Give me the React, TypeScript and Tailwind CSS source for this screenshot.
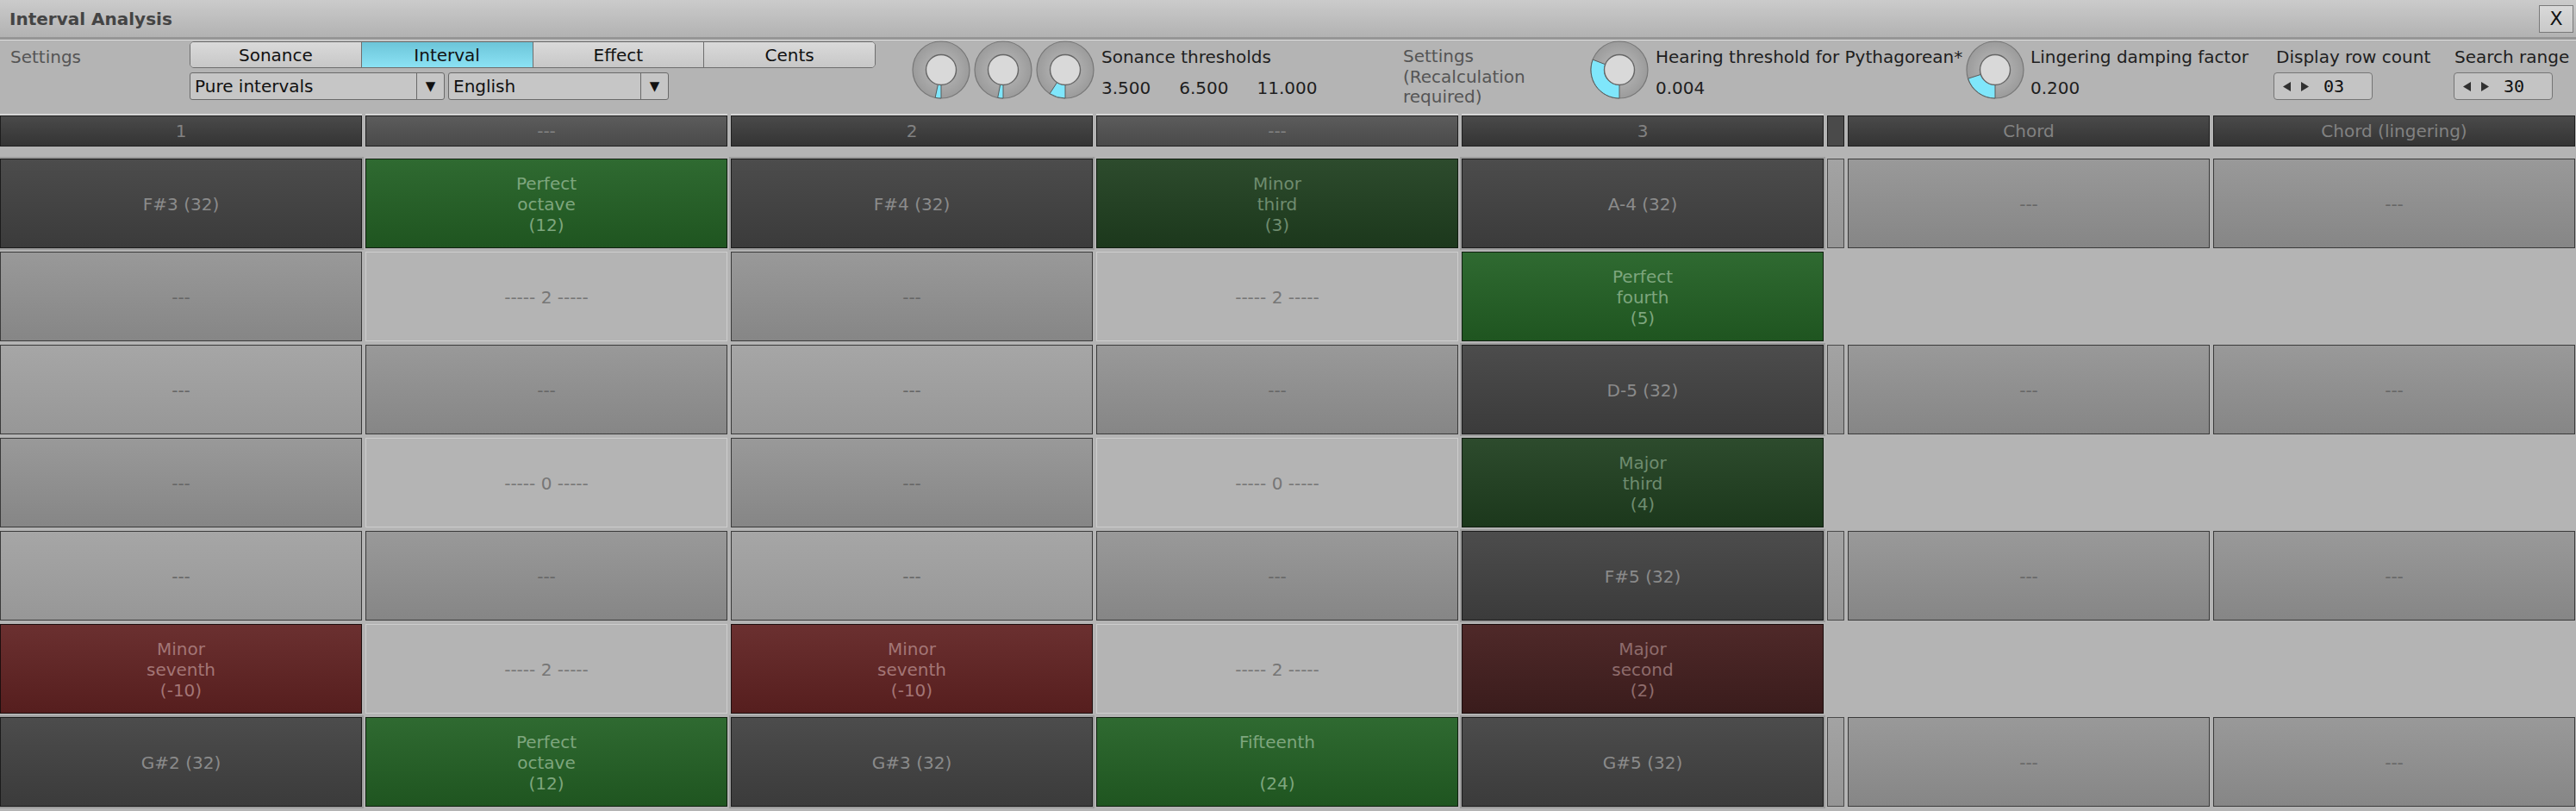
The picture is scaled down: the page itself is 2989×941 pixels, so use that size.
import React from 'react'

type Kind =
    | 'note'
    | 'green'
    | 'dgreen'
    | 'red'
    | 'dred'
    | 'grayA'
    | 'grayB'
    | 'plain'
    | 'small'
    | 'empty'

type Cell = {kind: Kind; text?: string}

const n = (text: string): Cell => ({kind: 'note', text})
const g = (text: string): Cell => ({kind: 'green', text})
const dg = (text: string): Cell => ({kind: 'dgreen', text})
const r = (text: string): Cell => ({kind: 'red', text})
const dr = (text: string): Cell => ({kind: 'dred', text})
const A: Cell = {kind: 'grayA', text: '---'}
const B: Cell = {kind: 'grayB', text: '---'}
const p = (text: string): Cell => ({kind: 'plain', text})
const S: Cell = {kind: 'small'}
const E: Cell = {kind: 'empty'}

const rows: Cell[][] = [
    [n('F#3 (32)'), g('Perfect\noctave\n(12)'), n('F#4 (32)'), dg('Minor\nthird\n(3)'), n('A-4 (32)'), S, A, A],
    [A, p('----- 2 -----'), A, p('----- 2 -----'), g('Perfect\nfourth\n(5)'), E, E, E],
    [B, A, B, A, n('D-5 (32)'), S, A, A],
    [A, p('----- 0 -----'), A, p('----- 0 -----'), dg('Major\nthird\n(4)'), E, E, E],
    [B, A, B, A, n('F#5 (32)'), S, A, A],
    [r('Minor\nseventh\n(-10)'), p('----- 2 -----'), r('Minor\nseventh\n(-10)'), p('----- 2 -----'), dr('Major\nsecond\n(2)'), E, E, E],
    [n('G#2 (32)'), g('Perfect\noctave\n(12)'), n('G#3 (32)'), g('Fifteenth\n\n(24)'), n('G#5 (32)'), S, A, A],
]

const kindClass: Record<Kind, string> = {
    note: 'bg-gradient-to-b from-[#4c4c4c] to-[#3b3b3b] border border-[#1c1c1c] text-[#8b8b8b] shadow-[0_0_0_2px_#9c9c9c]',
    green: 'bg-gradient-to-b from-[#2f6a31] to-[#1f5520] border border-[#0f200f] text-[#7ea67e]',
    dgreen: 'bg-gradient-to-b from-[#2d4b2d] to-[#1c381c] border border-[#0f1c0f] text-[#6f8c6f]',
    red: 'bg-gradient-to-b from-[#6b3030] to-[#561e1e] border border-[#1e0e0e] text-[#a37676]',
    dred: 'bg-gradient-to-b from-[#4f2929] to-[#3a1c1c] border border-[#1a0c0c] text-[#8e6c6c]',
    grayA: 'bg-gradient-to-b from-[#999999] to-[#868686] border border-[#3a3a3a] text-[#666666]',
    grayB: 'bg-gradient-to-b from-[#a6a6a6] to-[#979797] border border-[#3a3a3a] text-[#666666]',
    plain: 'border border-[#cdcdcd] text-[#767676]',
    small: 'bg-gradient-to-b from-[#a3a3a3] to-[#959595] border border-[#4a4a4a]',
    empty: '',
}

function GridCell({cell}: {cell: Cell}) {
    return (
        <div
            className={`flex items-center justify-center pt-[2px] text-center whitespace-pre leading-[24px] text-[20px] ${kindClass[cell.kind]}`}>
            {cell.text}
        </div>
    )
}

function Knob({angle}: {angle: number}) {
    const cx = 34
    const cy = 34
    const R = 33
    const ri = 17.5
    const rad = (angle * Math.PI) / 180
    const ox = cx - R * Math.sin(rad)
    const oy = cy + R * Math.cos(rad)
    const ix = cx - ri * Math.sin(rad)
    const iy = cy + ri * Math.cos(rad)
    const large = angle > 180 ? 1 : 0
    const d = `M ${cx} ${cy + R} A ${R} ${R} 0 ${large} 1 ${ox} ${oy} L ${ix} ${iy} A ${ri} ${ri} 0 ${large} 0 ${cx} ${cy + ri} Z`
    return (
        <svg width="68" height="68" viewBox="0 0 68 68" className="shrink-0">
            <defs>
                <radialGradient id="ring" cx="50%" cy="50%" r="50%">
                    <stop offset="60%" stopColor="#a9a9a9" />
                    <stop offset="100%" stopColor="#9b9b9b" />
                </radialGradient>
            </defs>
            <circle cx={cx} cy={cy} r={R} fill="url(#ring)" stroke="#777777" strokeWidth="1.2" />
            <path d={d} fill="#7fe6fb" stroke="#5a5a5a" strokeWidth="1" />
            <circle cx={cx} cy={cy} r={ri} fill="#d9d9d9" stroke="#666666" strokeWidth="1.4" />
        </svg>
    )
}

function Spinner({value}: {value: string}) {
    return (
        <div className="mt-[6px] flex h-[32px] w-[115px] items-center rounded-[4px] border border-[#757575] bg-[#c4c4c4] pl-[10px]">
            <svg width="9" height="11" viewBox="0 0 9 11">
                <path d="M9 0 L0 5.5 L9 11 Z" fill="#303030" />
            </svg>
            <svg width="9" height="11" viewBox="0 0 9 11" className="ml-[12px]">
                <path d="M0 0 L9 5.5 L0 11 Z" fill="#303030" />
            </svg>
            <span className="ml-[17px] font-['DejaVu_Sans_Mono'] text-[20px] text-[#111]">{value}</span>
        </div>
    )
}

const headers = ['1', '---', '2', '---', '3', '', 'Chord', 'Chord (lingering)']

export default function App() {
    return (
        <div className="w-[2989px] h-[941px] overflow-hidden bg-[#b4b4b4] font-['DejaVu_Sans',sans-serif] text-[20px]">
            {/* title bar */}
            <div className="flex h-[43px] items-center justify-between bg-gradient-to-b from-[#cbcbcb] to-[#b2b2b2] pl-[11px] pr-[3px]">
                <span className="font-bold text-[#444444]">Interval Analysis</span>
                <div className="flex h-[32px] w-[40px] items-center justify-center border border-[#7a7a7a] bg-gradient-to-b from-[#d9d9d9] to-[#c9c9c9] text-[22px] leading-none text-[#111]">
                    X
                </div>
            </div>
            <div className="h-[3px] bg-[#959595]" />
            <div className="h-[1px] bg-[#dedede]" />

            {/* settings */}
            <div className="flex h-[87px] leading-[24px]">
                <div className="w-[220px] pl-[12px] pt-[7px] text-[#555555]">Settings</div>

                <div className="w-[796px] pt-[1px]">
                    <div className="flex h-[31px] overflow-hidden rounded-[5px] border border-[#6e6e6e]">
                        <div className="flex flex-1 items-center justify-center bg-gradient-to-b from-[#dadada] to-[#c7c7c7] text-[#111]">
                            Sonance
                        </div>
                        <div className="flex flex-1 items-center justify-center border-l border-[#6e6e6e] bg-gradient-to-b from-[#6cc5d9] to-[#8be2f4] text-[#111]">
                            Interval
                        </div>
                        <div className="flex flex-1 items-center justify-center border-l border-[#6e6e6e] bg-gradient-to-b from-[#dadada] to-[#c7c7c7] text-[#111]">
                            Effect
                        </div>
                        <div className="flex flex-1 items-center justify-center border-l border-[#6e6e6e] bg-gradient-to-b from-[#dadada] to-[#c7c7c7] text-[#111]">
                            Cents
                        </div>
                    </div>
                    <div className="mt-[5px] flex gap-[4px]">
                        <div className="flex h-[32px] w-[296px] rounded-[3px] border border-[#6a6a6a] bg-[#c6c6c6]">
                            <span className="flex-1 pl-[5px] leading-[31px] text-[#111]">Pure intervals</span>
                            <span className="flex w-[32px] items-center justify-center border-l border-[#6a6a6a] text-[15px] text-[#111]">▼</span>
                        </div>
                        <div className="flex h-[32px] w-[256px] rounded-[3px] border border-[#6a6a6a] bg-[#c6c6c6]">
                            <span className="flex-1 pl-[5px] leading-[31px] text-[#111]">English</span>
                            <span className="flex w-[32px] items-center justify-center border-l border-[#6a6a6a] text-[15px] text-[#111]">▼</span>
                        </div>
                    </div>
                </div>

                <div className="ml-[42px] flex gap-[4px]">
                    <Knob angle={12} />
                    <Knob angle={11} />
                    <Knob angle={33} />
                </div>

                <div className="ml-[8px] w-[350px] pt-[7px] text-[#1e1e1e]">
                    <div>Sonance thresholds</div>
                    <div className="mt-[12px] flex gap-[33px]">
                        <span>3.500</span>
                        <span>6.500</span>
                        <span>11.000</span>
                    </div>
                </div>

                <div className="w-[217px] pt-[7px] leading-[23.5px] text-[#555555]">
                    <div>Settings</div>
                    <div>(Recalculation</div>
                    <div>required)</div>
                </div>

                <Knob angle={111} />
                <div className="ml-[8px] w-[360px] pt-[7px] text-[#1e1e1e]">
                    <div>Hearing threshold for Pythagorean*</div>
                    <div className="mt-[12px]">0.004</div>
                </div>

                <Knob angle={72} />
                <div className="ml-[7px] w-[282px] pt-[7px] text-[#1e1e1e]">
                    <div>Lingering damping factor</div>
                    <div className="mt-[12px]">0.200</div>
                </div>

                <div className="w-[209px] pt-[7px] text-[#1e1e1e]">
                    <div className="pl-[3px]">Display row count</div>
                    <Spinner value="03" />
                </div>

                <div className="pt-[7px] text-[#1e1e1e]">
                    <div className="pl-[1px]">Search range</div>
                    <Spinner value="30" />
                </div>
            </div>

            {/* header row */}
            <div className="grid h-[36px] grid-cols-[420px_420px_420px_420px_420px_20px_420px_420px] gap-x-[4px]">
                {headers.map((h, i) => (
                    <div
                        key={i}
                        className={`flex items-center justify-center border border-[#1e1e1e] text-[#828282] ${
                            i === 1 || i === 3
                                ? 'bg-gradient-to-b from-[#5c5c5c] to-[#4a4a4a]'
                                : i === 5
                                  ? 'bg-[#4a4a4a]'
                                  : 'bg-gradient-to-b from-[#4a4a4a] to-[#343434]'
                        } ${i < 5 ? 'shadow-[0_-2px_0_0_#d6d6d6]' : ''}`}>
                        {h}
                    </div>
                ))}
            </div>

            {/* rows */}
            <div className="mt-[14px] grid grid-cols-[420px_420px_420px_420px_420px_20px_420px_420px] grid-rows-[repeat(7,104px)] gap-x-[4px] gap-y-[4px]">
                {rows.map((row, ri) =>
                    row.map((cell, ci) => <GridCell key={`${ri}-${ci}`} cell={cell} />),
                )}
            </div>
        </div>
    )
}
